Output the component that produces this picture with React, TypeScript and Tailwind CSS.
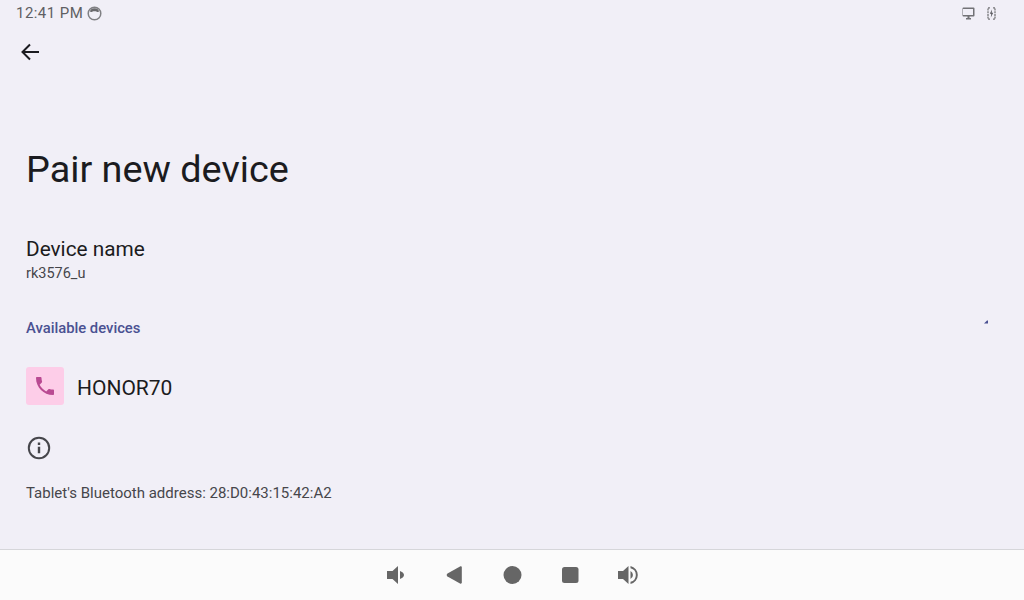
export default function App() {
  return (
    <div className="w-[1024px] h-[600px] flex flex-col overflow-hidden bg-[#f1eff7] font-['Roboto',sans-serif] text-[#1b1b20]">
      <div className="h-[26px] flex items-center justify-between pl-4 pr-[28px] text-[#5f5f63]">
        <div className="flex items-center gap-[4px]">
          <span className="text-[15px] tracking-[0.45px] leading-[26px]">12:41 PM</span>
          <svg width="15" height="15" viewBox="0 0 15 15" fill="none">
            <circle cx="7.500" cy="7.500" r="6.300" stroke="#808084" strokeWidth="1.500" />
            <path d="M2.800 5.500a5 5 0 0 1 9.400 0c-1 .6-1.600.6-2.400.2-1.300-.5-3.300-.5-4.600 0-.8.4-1.400.4-2.400-.2z" fill="#6a6a6d" />
          </svg>
        </div>
        <div className="flex items-center gap-[12px]">
          <svg width="14" height="13" viewBox="0 0 14 13" fill="#727276">
            <path d="M1.500 0.500h11a1 1 0 0 1 1 1v7a1 1 0 0 1-1 1h-4v1.500h1.500v1.500h-5v-1.500h1.500v-1.500h-4a1 1 0 0 1-1-1v-7a1 1 0 0 1 1-1z M2 2v6h10v-6z" fillRule="evenodd" />
          </svg>
          <svg width="9" height="13" viewBox="0 0 9 13" fill="none">
            <path d="M3 .8H1v11.400h2M6 .8h2v11.400H6" stroke="#77777a" strokeWidth="1.300" strokeDasharray="2 .7" />
            <path d="M5 2.500L2.800 6.800h1.500L3.800 10.500 6.200 5.800H4.700z" fill="#55555a" />
          </svg>
        </div>
      </div>
      <div className="h-[52px] flex items-center pl-[20px] pb-[1px]">
        <svg width="20" height="20" viewBox="0 0 20 20" fill="none" stroke="#1b1b20" strokeWidth="2">
          <path d="M19 10H2.500M10 2.500L2.500 10l7.500 7.500" />
        </svg>
      </div>
      <h1 className="mt-[68px] ml-[26px] text-[37.800px] leading-[46px] font-normal">Pair new device</h1>
      <div className="mt-[44px] ml-[26px] text-[20.8px] leading-[26px]">Device name</div>
      <div className="mt-[2px] ml-[26px] text-[14.500px] leading-[20px] text-[#46464b]">rk3576_u</div>
      <div className="mt-[34px] pl-[26px] pr-[36px] flex items-start justify-between">
        <span className="text-[14.800px] leading-[20px] font-medium text-[#4a5192]">Available devices</span>
        <svg width="4" height="4" viewBox="0 0 4 4" fill="#4a5192" className="mt-[2px]">
          <path d="M0 3.500L3 .5l1 0 0 3z" />
        </svg>
      </div>
      <div className="mt-[29px] ml-[26px] flex items-center gap-[13px]">
        <div className="w-[38px] h-[38px] rounded-[3px] bg-[#fdcde8] flex items-center justify-center">
          <svg width="24" height="24" viewBox="0 0 24 24" fill="#b94a92">
            <path d="M6.620 10.790c1.440 2.830 3.760 5.140 6.590 6.590l2.200-2.200c.27-.27.670-.36 1.020-.24 1.120.37 2.330.57 3.570.57.550 0 1 .45 1 1V20c0 .55-.45 1-1 1C10.610 21 3 13.390 3 4c0-.55.45-1 1-1h3.500c.55 0 1 .45 1 1 0 1.250.2 2.450.57 3.570.11.350.03.740-.25 1.020l-2.200 2.200z" />
          </svg>
        </div>
        <span className="text-[21px] leading-[26px] pt-[3px]">HONOR70</span>
      </div>
      <div className="mt-[31px] ml-[27px]">
        <svg width="24" height="24" viewBox="0 0 24 24" fill="none" className="block">
          <circle cx="12" cy="12" r="10.200" stroke="#46464b" strokeWidth="2" />
          <path d="M10.800 10.800h2.400v6.400h-2.400zM10.800 6.600h2.400v2.400h-2.400z" fill="#46464b" />
        </svg>
      </div>
      <div className="mt-[23px] ml-[26px] text-[15px] leading-[20px] text-[#46464b]">Tablet's Bluetooth address: 28:D0:43:15:42:A2</div>
      <div className="mt-auto h-[51px] border-t border-[#d6d6da] bg-[#fbfbfb] flex items-center justify-center gap-[34px] pb-[1px]">
        <svg width="24" height="24" viewBox="0 0 24 24" fill="#666666">
          <path d="M3 8h5.500L14 3v18l-5.500-5H3z" />
          <path d="M16 8c2 .8 4 2 4 4s-2 3.200-4 4z" />
        </svg>
        <svg width="24" height="24" viewBox="0 0 24 24" fill="#666666">
          <path d="M18 3.500c1-.5 1.800 0 1.800 1v15c0 1-.8 1.500-1.800 1L5.500 13.500c-1.100-.7-1.100-2.300 0-3z" />
        </svg>
        <svg width="24" height="24" viewBox="0 0 24 24" fill="#666666">
          <circle cx="12.500" cy="12" r="9" />
        </svg>
        <svg width="24" height="24" viewBox="0 0 24 24" fill="#666666">
          <rect x="4" y="4" width="16.500" height="16" rx="2.500" />
        </svg>
        <svg width="24" height="24" viewBox="0 0 24 24" fill="#666666">
          <path d="M2 8h5L12.500 3v18L7 16H2z" />
          <path d="M14.500 8a4.500 4.500 0 0 1 0 8z" />
          <path d="M14.500 3v2.200a7 7 0 0 1 0 13.600V21a9.200 9.200 0 0 0 0-18z" />
        </svg>
      </div>
    </div>
  );
}
